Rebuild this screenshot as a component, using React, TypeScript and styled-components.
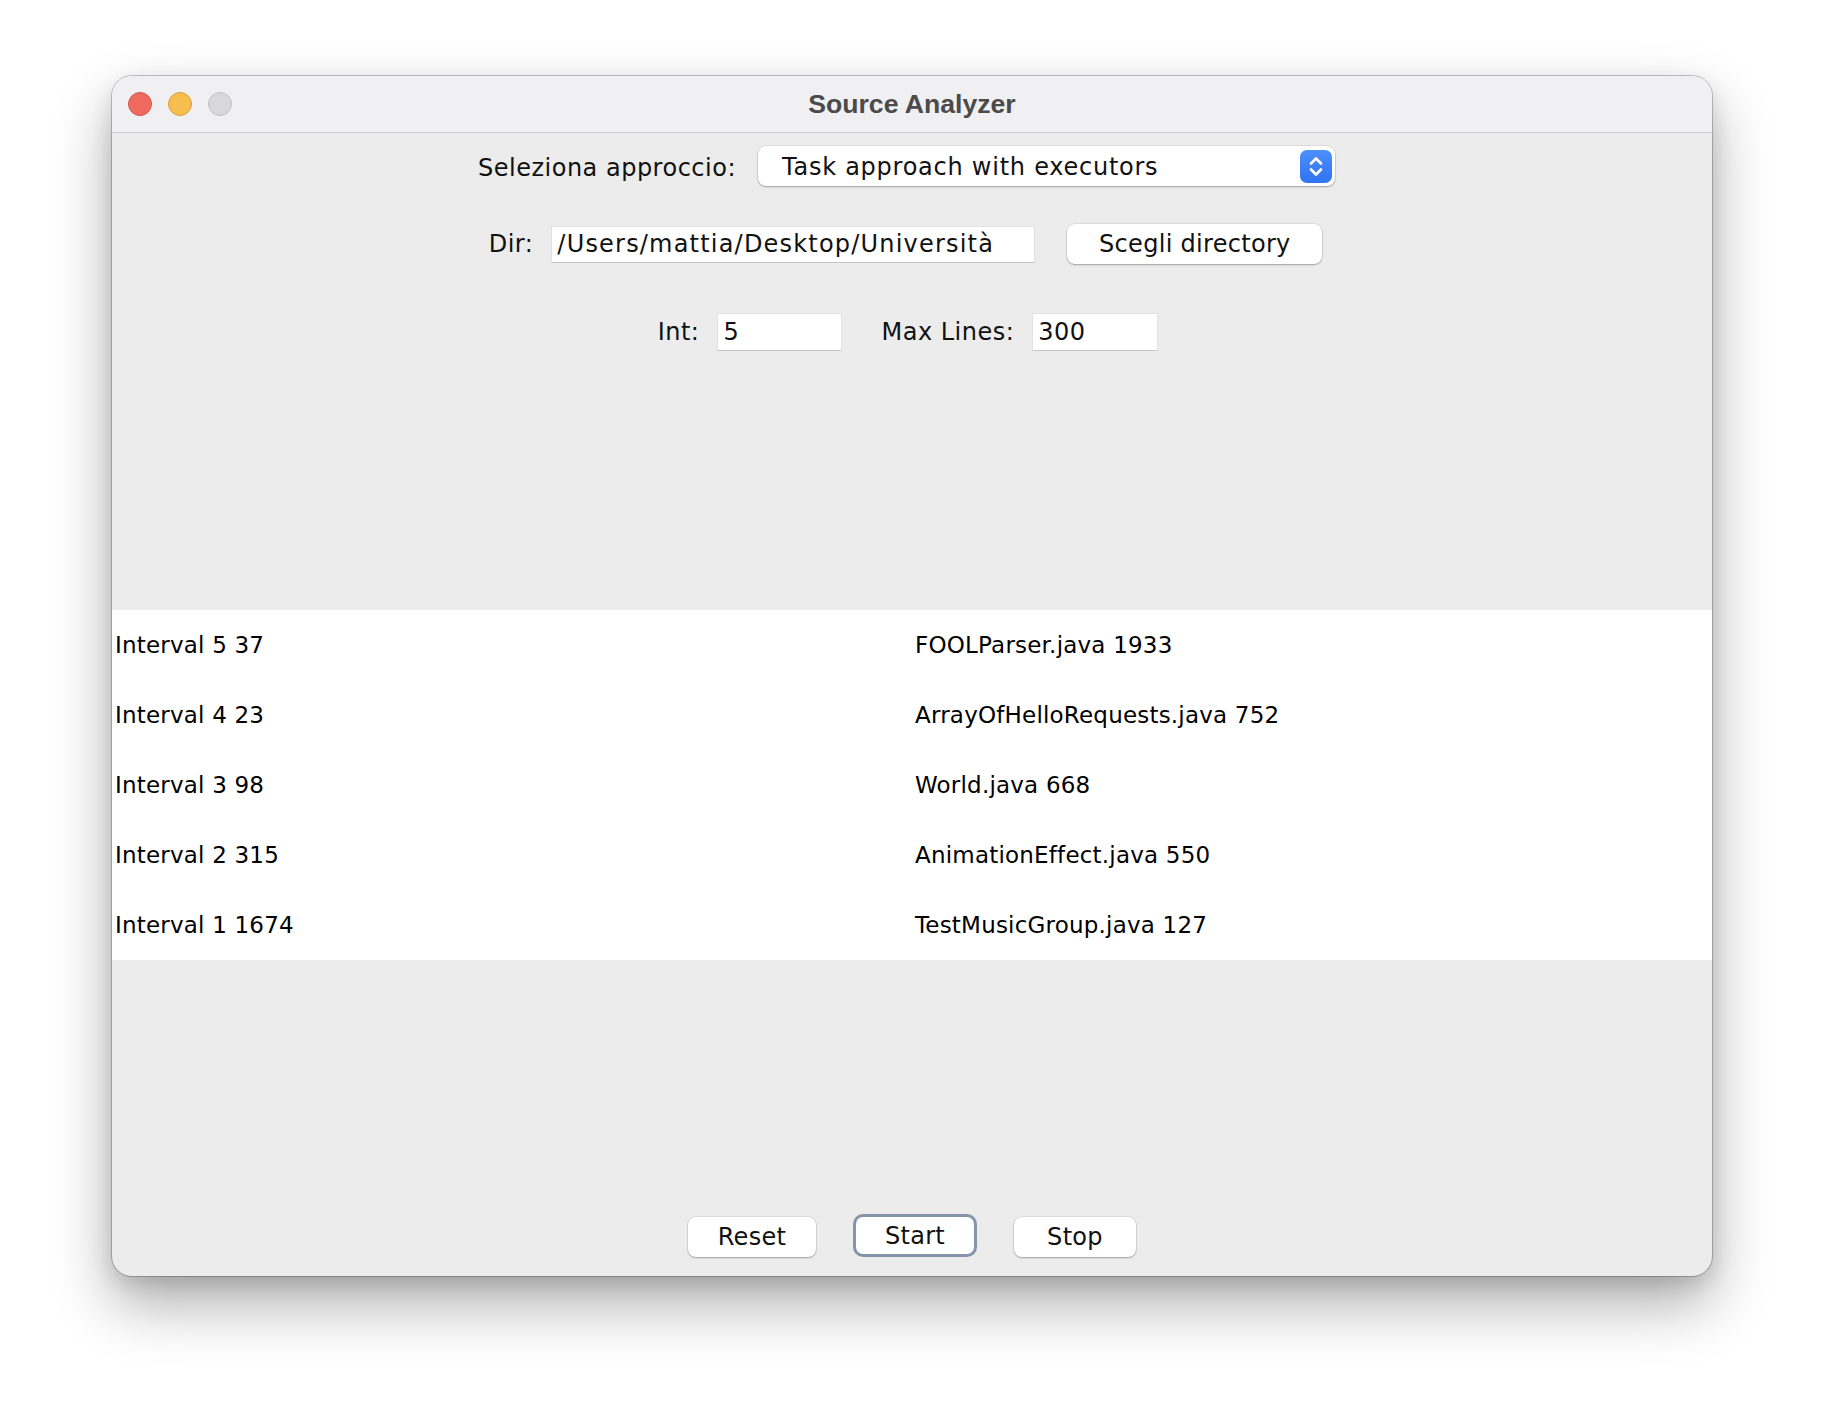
import React from 'react';
import styled, { createGlobalStyle } from 'styled-components';

const GlobalStyle = createGlobalStyle`
  html, body {
    margin: 0;
    padding: 0;
    background: #ffffff;
  }
  body {
    font-family: 'DejaVu Sans', 'Liberation Sans', sans-serif;
    color: #000;
  }
`;

const intervals = ['Interval 5 37', 'Interval 4 23', 'Interval 3 98', 'Interval 2 315', 'Interval 1 1674'];
const files = [
  'FOOLParser.java 1933',
  'ArrayOfHelloRequests.java 752',
  'World.java 668',
  'AnimationEffect.java 550',
  'TestMusicGroup.java 127',
];

const StepperIcon = () => (
  <svg width="32" height="33" viewBox="0 0 32 33">
    <defs>
      <linearGradient id="stepGrad" x1="0" y1="0" x2="0" y2="1">
        <stop offset="0" stopColor="#4d8ffa" />
        <stop offset="1" stopColor="#2f74f2" />
      </linearGradient>
    </defs>
    <rect x="0" y="0" width="32" height="33" rx="7" fill="url(#stepGrad)" />
    <path d="M11 13.5 L16 8.5 L21 13.5" fill="none" stroke="#fff" strokeWidth="2.6" strokeLinecap="round" strokeLinejoin="round" />
    <path d="M11 19.5 L16 24.5 L21 19.5" fill="none" stroke="#fff" strokeWidth="2.6" strokeLinecap="round" strokeLinejoin="round" />
  </svg>
);

export default function App() {
  return (
    <>
      <GlobalStyle />
      <Page>
        <Window>
          <TitleBar>
            <Lights>
              <Light $fill="#ee6a5f" $edge="#d2564c" />
              <Light $fill="#f5be4f" $edge="#d9a13f" />
              <Light $fill="#d8d8da" $edge="#c2c2c4" />
            </Lights>
            <Title>Source Analyzer</Title>
          </TitleBar>

          <Content>
            <TopPanel>
              <FlowRow $mt={13} $shift={11}>
                <Label $dy={3}>Seleziona approccio:</Label>
                <Combo>
                  <ComboText>Task approach with executors</ComboText>
                  <StepperIcon />
                </Combo>
              </FlowRow>

              <FlowRow $mt={38} $shift={13}>
                <Label>Dir:</Label>
                <TextField $w={484} $h={37} $spaced>
                  /Users/mattia/Desktop/Università
                </TextField>
                <PushButton $w={255} style={{ marginLeft: 14 }}>
                  Scegli directory
                </PushButton>
              </FlowRow>

              <FlowRow $mt={49} $shift={8}>
                <Label>Int:</Label>
                <TextField $w={125} $h={38}>5</TextField>
                <Label style={{ marginLeft: 21 }}>Max Lines:</Label>
                <TextField $w={126} $h={38}>300</TextField>
              </FlowRow>
            </TopPanel>

            <ResultList>
              {intervals.map((iv, i) => (
                <React.Fragment key={iv}>
                  <Cell>{iv}</Cell>
                  <Cell>{files[i]}</Cell>
                </React.Fragment>
              ))}
            </ResultList>

            <BottomPanel>
              <PushButton $w={128}>Reset</PushButton>
              <PushButton $w={124} $focused>
                Start
              </PushButton>
              <PushButton $w={122}>Stop</PushButton>
            </BottomPanel>
          </Content>
        </Window>
      </Page>
    </>
  );
}

const Page = styled.div`
  width: 1824px;
  height: 1424px;
  box-sizing: border-box;
  padding: 76px 112px 0;
`;

const Window = styled.div`
  width: 1600px;
  height: 1200px;
  border-radius: 20px;
  overflow: hidden;
  display: flex;
  flex-direction: column;
  background: #ececec;
  box-shadow: 0 0 0 1px rgba(0, 0, 0, 0.22), 0 28px 60px rgba(0, 0, 0, 0.32), 0 8px 20px rgba(0, 0, 0, 0.12);
`;

const TitleBar = styled.div`
  position: relative;
  height: 56px;
  flex: none;
  display: flex;
  align-items: center;
  justify-content: center;
  background: #f0f0f2;
  border-bottom: 1px solid #cfcfcf;
`;

const Lights = styled.div`
  position: absolute;
  left: 16px;
  top: 16px;
  display: flex;
  gap: 16px;
`;

const Light = styled.span<{ $fill: string; $edge: string }>`
  width: 24px;
  height: 24px;
  box-sizing: border-box;
  border-radius: 50%;
  background: ${(p) => p.$fill};
  border: 1px solid ${(p) => p.$edge};
`;

const Title = styled.div`
  font-family: 'Liberation Sans', Arial, sans-serif;
  font-weight: 700;
  font-size: 26.6px;
  color: #4b4b4b;
`;

const Content = styled.div`
  flex: 1;
  display: flex;
  flex-direction: column;
`;

const TopPanel = styled.div`
  height: 477px;
  flex: none;
  display: flex;
  flex-direction: column;
`;

const FlowRow = styled.div<{ $mt: number; $shift: number }>`
  margin-top: ${(p) => p.$mt}px;
  padding-right: ${(p) => p.$shift}px;
  display: flex;
  align-items: center;
  justify-content: center;
  gap: 18px;
`;

const Label = styled.span<{ $dy?: number }>`
  font-size: 24px;
  line-height: 1;
  letter-spacing: 0.5px;
  padding-top: ${(p) => p.$dy ?? 0}px;
  color: #111;
`;

const Combo = styled.div`
  width: 577px;
  height: 40px;
  box-sizing: border-box;
  margin-left: 4px;
  padding: 0 3px 0 24px;
  display: flex;
  align-items: center;
  justify-content: space-between;
  background: #fff;
  border-radius: 8px;
  box-shadow: 0 0 0 0.5px rgba(0, 0, 0, 0.12), 0 1px 2px rgba(0, 0, 0, 0.28);
`;

const ComboText = styled.span`
  font-size: 24px;
  letter-spacing: 0.75px;
  padding-top: 2px;
  color: #111;
`;

const TextField = styled.div<{ $w: number; $h: number; $spaced?: boolean }>`
  width: ${(p) => p.$w}px;
  height: ${(p) => p.$h}px;
  box-sizing: border-box;
  padding-left: 5px;
  display: flex;
  align-items: center;
  background: #fff;
  border: 1px solid #e2e2e2;
  border-bottom-color: #c6c6c6;
  font-size: 24px;
  letter-spacing: ${(p) => (p.$spaced ? '1.2px' : '0.4px')};
  color: #111;
  white-space: nowrap;
  overflow: hidden;
`;

const PushButton = styled.div<{ $w: number; $focused?: boolean }>`
  width: ${(p) => p.$w}px;
  height: ${(p) => (p.$focused ? 43 : 40)}px;
  box-sizing: border-box;
  display: flex;
  align-items: center;
  justify-content: center;
  background: #fff;
  border-radius: ${(p) => (p.$focused ? 10 : 8)}px;
  border: ${(p) => (p.$focused ? '3px solid #8494ab' : 'none')};
  box-shadow: ${(p) =>
    p.$focused ? 'none' : '0 0 0 0.5px rgba(0, 0, 0, 0.12), 0 1px 2px rgba(0, 0, 0, 0.28)'};
  font-size: 24px;
  letter-spacing: 0.3px;
  color: #111;
`;

const ResultList = styled.div`
  height: 350px;
  flex: none;
  display: grid;
  grid-template-columns: 1fr 1fr;
  grid-auto-rows: 70px;
  background: #fff;
`;

const Cell = styled.div`
  display: flex;
  align-items: center;
  padding-left: 3px;
  font-size: 23px;
  letter-spacing: 0.2px;
  color: #000;
`;

const BottomPanel = styled.div`
  flex: 1;
  display: flex;
  align-items: flex-end;
  justify-content: center;
  gap: 37px;
  padding-bottom: 19px;
`;
